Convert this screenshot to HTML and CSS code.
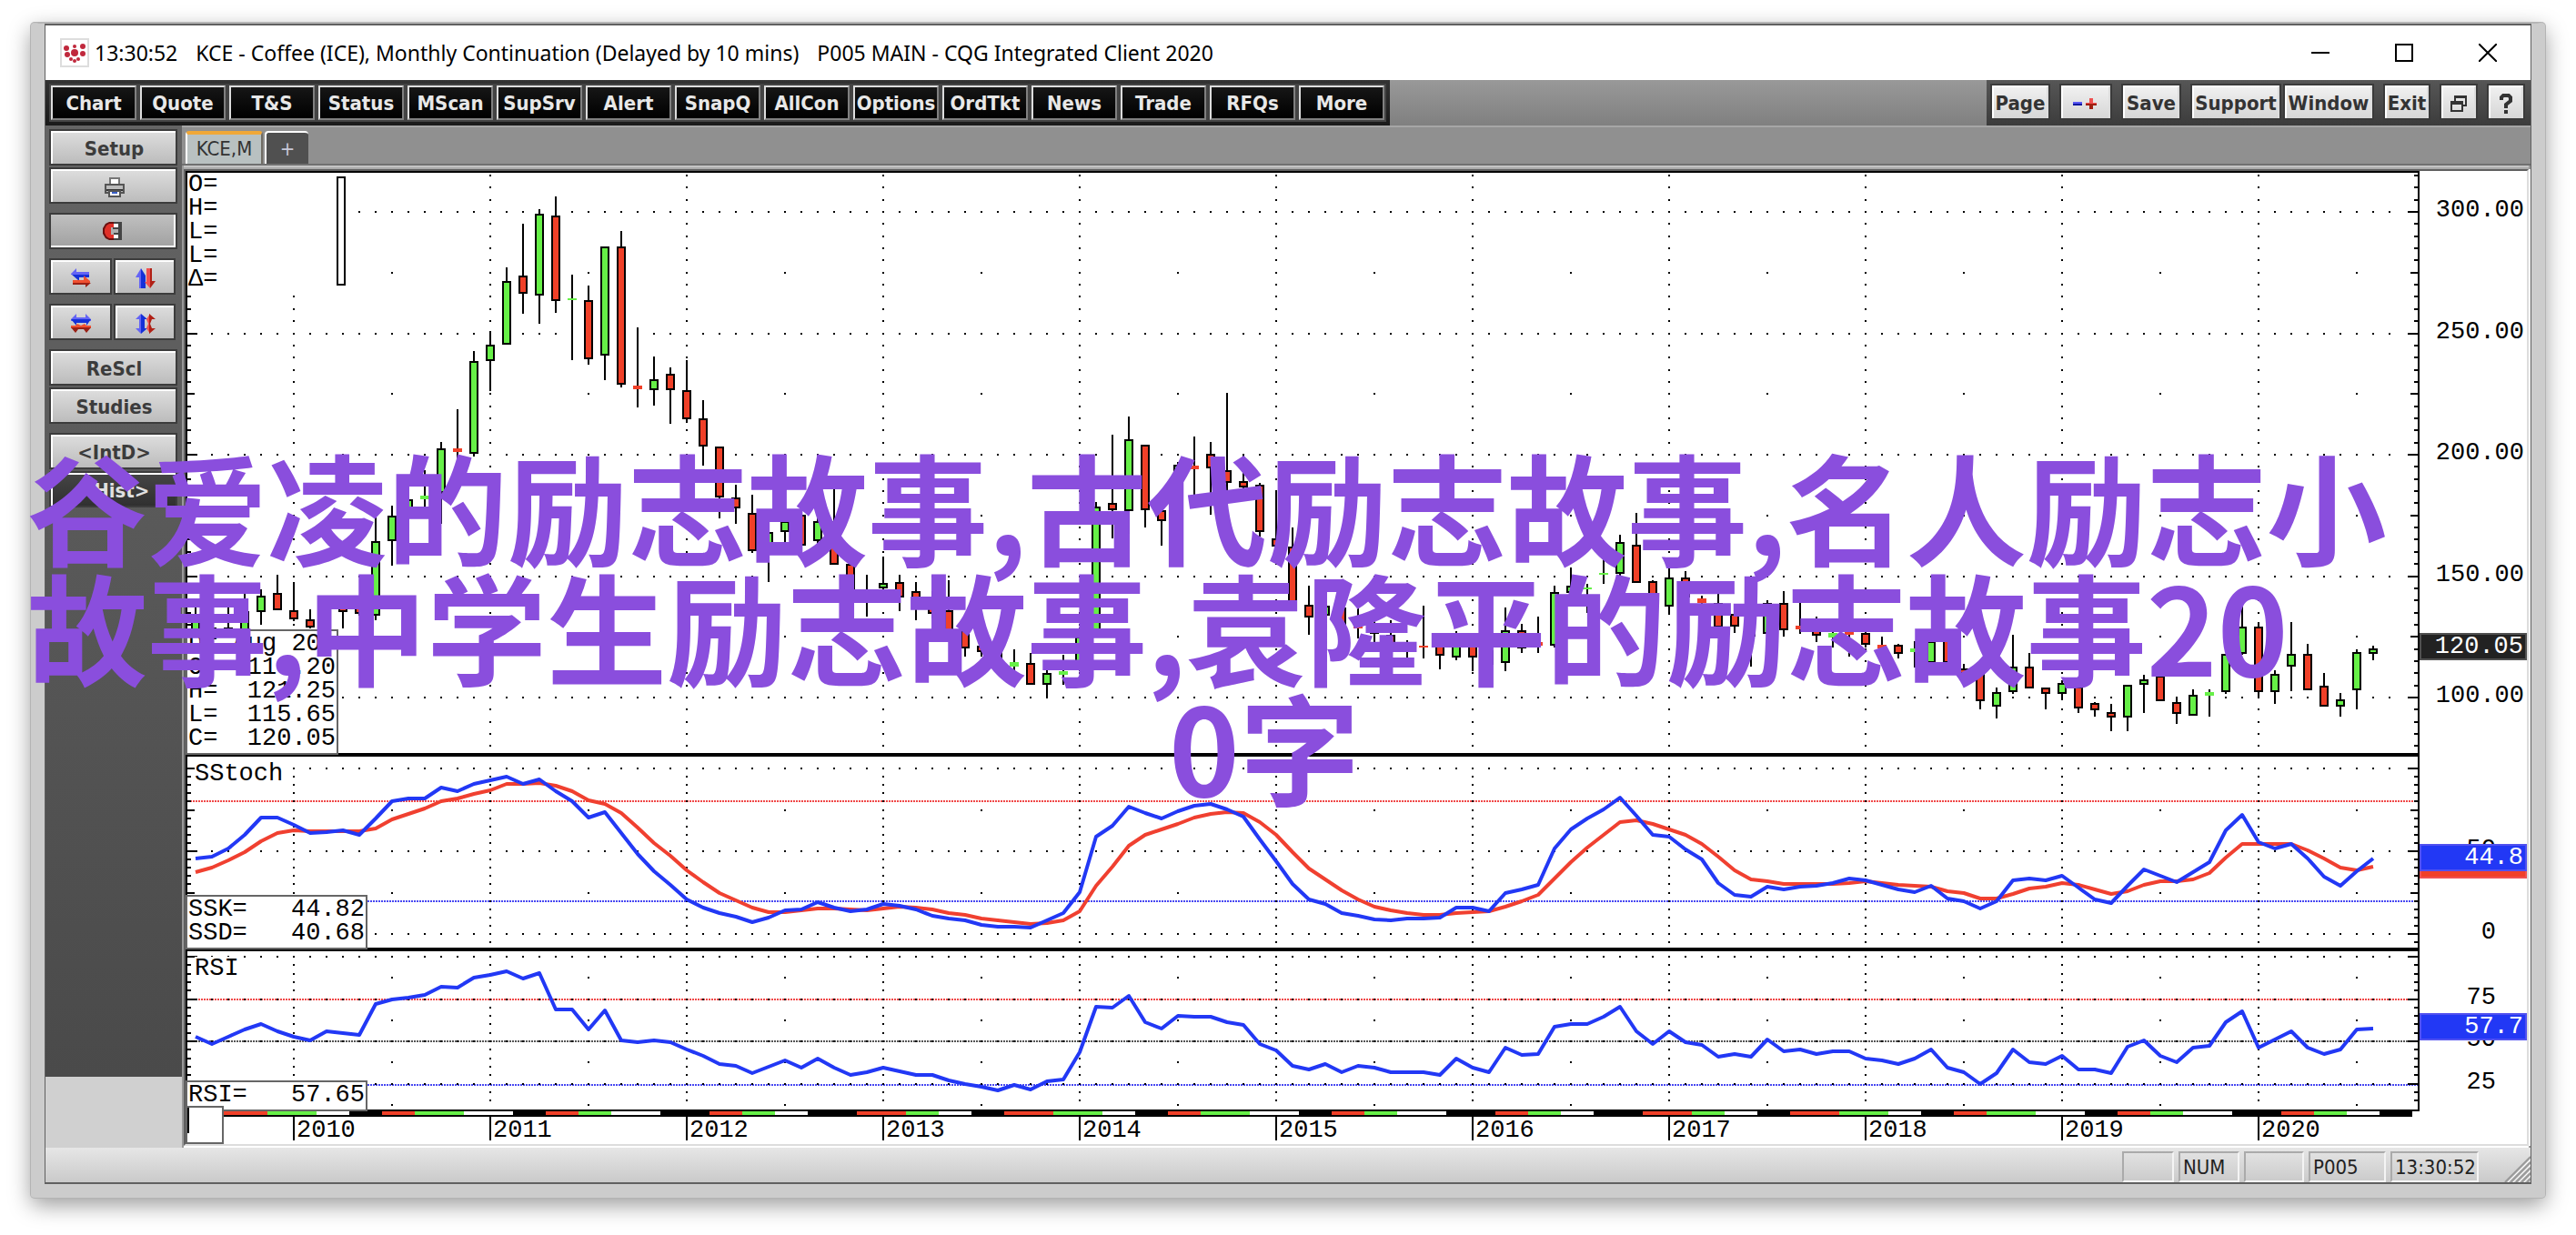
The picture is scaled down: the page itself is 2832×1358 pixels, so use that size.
FILE: index.html
```html
<!DOCTYPE html>
<html lang="en">
<head>
<meta charset="utf-8">
<title>KCE - Coffee (ICE), Monthly Continuation</title>
<link rel="stylesheet" href="styles.css">
</head>
<body>
<div class="window">
  <header class="titlebar">
    <svg class="app-icon" width="32" height="32" viewBox="0 0 32 32" aria-hidden="true">
      <rect x="1" y="1" width="30" height="30" fill="#fff" stroke="#ddd" stroke-width="2"/>
      <g fill="#c0283c"><circle cx="7" cy="11" r="3"/><circle cx="16" cy="9" r="2"/><circle cx="25" cy="9" r="3"/><circle cx="16" cy="16" r="4"/><circle cx="8" cy="18" r="3"/><circle cx="25" cy="17" r="3"/><circle cx="12" cy="23" r="2"/><circle cx="20" cy="23" r="2"/><circle cx="16" cy="25" r="2"/></g>
    </svg>
    <h1 class="title"><span>13:30:52</span><span>KCE - Coffee (ICE), Monthly Continuation (Delayed by 10 mins)</span><span>P005 MAIN - CQG Integrated Client 2020</span></h1>
    <div class="window-controls">
      <button type="button" aria-label="Minimize"><svg width="20" height="20"><path d="M0 10h20" stroke="#000" stroke-width="2"/></svg></button>
      <button type="button" aria-label="Maximize"><svg width="20" height="20"><rect x="1" y="1" width="18" height="18" fill="none" stroke="#000" stroke-width="2"/></svg></button>
      <button type="button" aria-label="Close"><svg width="20" height="20"><path d="M0 0l20 20M20 0L0 20" stroke="#000" stroke-width="2"/></svg></button>
    </div>
  </header>

  <div class="toolbar">
    <nav class="menu">
      <button type="button">Chart</button><button type="button">Quote</button><button type="button">T&amp;S</button><button type="button">Status</button><button type="button">MScan</button><button type="button">SupSrv</button><button type="button">Alert</button><button type="button">SnapQ</button><button type="button">AllCon</button><button type="button">Options</button><button type="button">OrdTkt</button><button type="button">News</button><button type="button">Trade</button><button type="button">RFQs</button><button type="button">More</button>
    </nav>
    <div class="tools">
      <button type="button" class="w-m">Page</button>
      <button type="button" class="w-s" aria-label="Zoom"><svg width="28" height="16" shape-rendering="crispEdges"><path d="M0 6h10v2H0z" fill="#5a5af5"/><path d="M0 8h10v2H0z" fill="#1018a0"/><path d="M18 2h4v5h4v2H14V7h4z" fill="#f05050"/><path d="M14 8h12v2h-4v4h-4v-4h-4z" fill="#a02010"/></svg></button>
      <button type="button" class="w-m">Save</button>
      <div class="pair"><button type="button" class="w-l">Support</button><button type="button" class="w-l">Window</button></div>
      <button type="button" class="w-xs">Exit</button>
      <button type="button" class="w-icon" aria-label="Restore"><svg width="18" height="18" fill="none" stroke="#333" stroke-width="2"><path d="M5 6V1h12v10h-4M5 2h12"/><path d="M1 7h12v10H1zM1 9h12"/></svg></button>
      <button type="button" class="w-icon" aria-label="Help"><svg width="14" height="22" fill="none" stroke="#333" stroke-width="4"><path d="M2 7V4l2-2h6l2 2v4l-5 4v4M5 20h4"/></svg></button>
    </div>
  </div>

  <div class="workspace">
    <aside class="sidebar">
      <div class="group">
        <button type="button">Setup</button>
        <button type="button" aria-label="Print"><svg width="22" height="22"><path d="M6 1h10v7H6z" fill="#fff" stroke="#777" stroke-width="2"/><path d="M1 8h20v9H1z" fill="#bbb" stroke="#555" stroke-width="2"/><path d="M2 13h18v2H2z" fill="#333"/><path d="M5 15h12v6H5z" fill="#fff" stroke="#555" stroke-width="2"/><path d="M8 16h6v2H8z" fill="#3a5fc8"/></svg></button>
      </div>
      <div class="group"><button type="button" class="pressed" aria-label="Magnet"><svg width="22" height="20"><path d="M7 0h7v6H9v8h5v6H7l-4-2-3-5V7l3-5z" fill="#6a1010"/><path d="M7 2h7v4H9v8h5v4H7l-3-2-2-4V8l2-4z" fill="#e03028"/><path d="M12 2h5v4h-5zM12 14h5v4h-5z" fill="#fff"/><path d="M17 0h4v20h-9v-2h5v-4h-5v-2h5V8h-6V6h6V2h-5V0z" fill="#444"/></svg></button></div>
      <div class="group row">
        <button type="button" aria-label="Scroll horizontally"><svg width="22" height="22"><path d="M0 6l6-6v4h14v3H0z" fill="#6464f5"/><path d="M1 7h19v3H9v4z" fill="#1530d8"/><path d="M2 13h12V8l7 6v2H2z" fill="#f05030"/><path d="M2 16h20l-6 5v-3H2z" fill="#9a2015"/></svg></button>
        <button type="button" aria-label="Scroll vertically"><svg width="22" height="22"><path d="M6 0v22H4V10H0z" fill="#6464f5"/><path d="M6 0l5 8v14H6z" fill="#1530d8"/><path d="M12 0h4v22l-6-7h2z" fill="#f05050"/><path d="M16 0h2v14h4l-6 8z" fill="#b02015"/></svg></button>
      </div>
      <div class="group row">
        <button type="button" aria-label="Stretch horizontally"><svg width="22" height="22"><path d="M0 6l6-6v4h10V0l6 6v2H0z" fill="#6464f5"/><path d="M0 6h22l-5 7v-3H6v3z" fill="#1530d8"/><path d="M0 13h5l2-2 4 2 4-2 2 2h5v3H0z" fill="#f05030"/><path d="M0 15h22l-5 6-3-4H8l-3 4z" fill="#9a2015"/></svg></button>
        <button type="button" aria-label="Stretch vertically"><svg width="22" height="22"><path d="M6 0v22l-6-6h4V6H0z" fill="#6464f5"/><path d="M6 0l7 6h-3v10h3l-7 6z" fill="#1530d8"/><path d="M16 0v22l-4-6 2-5-2-5z" fill="#f05050"/><path d="M15 0l7 6h-4l-2 5 2 5h4l-7 6z" fill="#b02015"/></svg></button>
      </div>
      <div class="group"><button type="button">ReScl</button><button type="button">Studies</button></div>
      <div class="group"><button type="button">&lt;IntD&gt;</button><button type="button" class="active">&lt;Hist&gt;</button></div>
      <div class="sidebar-foot"></div>
    </aside>

    <main class="main">
      <div class="tabs"><button type="button" class="tab current">KCE,M</button><button type="button" class="tab add" aria-label="New tab">+</button></div>
      <div class="chart">
        <div class="plot">
          <svg id="plot" class="canvas" role="img" aria-label="Price, slow stochastic and RSI"></svg>
          <div class="legend">O=<br>H=<br>L=<br>L=<br>Δ=</div>
          <div class="cursor-bar"></div>
          <dl class="readout price">
            <div><dt>D=</dt><dd>Aug 20&nbsp;</dd></div>
            <div><dt>O=</dt><dd>118.20</dd></div>
            <div><dt>H=</dt><dd>121.25</dd></div>
            <div><dt>L=</dt><dd>115.65</dd></div>
            <div><dt>C=</dt><dd>120.05</dd></div>
          </dl>
          <div class="study stoch-name">SStoch</div>
          <dl class="readout stoch">
            <div><dt>SSK=</dt><dd>44.82</dd></div>
            <div><dt>SSD=</dt><dd>40.68</dd></div>
          </dl>
          <div class="study rsi-name">RSI</div>
          <dl class="readout rsi"><div><dt>RSI=</dt><dd>57.65</dd></div></dl>
          <div class="corner"></div>
        </div>
        <div class="axis">
          <svg id="axis" class="canvas" role="img" aria-label="Value scale"></svg>
          <div class="tag last">120.05</div>
          <div class="tag slow"></div>
          <div class="tag fast">44.8</div>
          <div class="tag strength">57.7</div>
        </div>
      </div>
    </main>
  </div>

  <footer class="statusbar">
    <span class="cell c1"></span><span class="cell c2">NUM</span><span class="cell c3"></span><span class="cell c4">P005</span><span class="cell c5">13:30:52</span>
    <svg class="grip" width="30" height="30"><path d="M2 30L30 2M8 30L30 8M14 30L30 14M20 30L30 20M26 30L30 26" stroke="#999" stroke-width="2"/><path d="M5 30L30 5M11 30L30 11M17 30L30 17M23 30L30 23" stroke="#fff" stroke-width="1"/></svg>
  </footer>
</div>

<div class="caption">
  <p>谷爱凌的励志故事,古代励志故事,名人励志小</p>
  <p>故事,中学生励志故事,袁隆平的励志故事20</p>
  <p class="last-line">0字</p>
</div>
<script src="chart.js"></script>
</body>
</html>
```

FILE: styles.css
```css
* { box-sizing: border-box; }

body {
  margin: 0;
  padding: 25px 34px 40px;
  background: #fff;
  position: relative;
  font-family: "DejaVu Sans Condensed", "Noto Sans", sans-serif;
}

button {
  font: inherit;
  margin: 0;
  padding: 0;
  border: 0;
  background: none;
  display: flex;
  align-items: center;
  justify-content: center;
}

.window {
  background: #606060;
  border: 15px solid #ccc;
  border-top: 1px solid #bbb;
  border-radius: 4px;
  padding: 2px 1px;
  box-shadow: 0 0 0 1px #b4b4b4, 0 8px 24px rgba(0, 0, 0, 0.4);
}

/* title bar */
.titlebar {
  height: 60px;
  background: #fff;
  display: flex;
  align-items: center;
  padding: 0 37px 0 16px;
}
.app-icon { margin-right: 6px; }
.title {
  margin: 0;
  display: flex;
  gap: 20px;
  font: 23px/32px "Noto Sans", sans-serif;
  color: #000;
  white-space: nowrap;
}
.window-controls { margin-left: auto; display: flex; gap: 72px; }
.window-controls svg { display: block; }

/* toolbar */
.toolbar {
  height: 50px;
  display: flex;
  justify-content: space-between;
  background: linear-gradient(#999, #808080);
  font-weight: bold;
  font-size: 22px;
  line-height: 30px;
}
.menu {
  display: flex;
  gap: 4px;
  padding: 6px;
  background: linear-gradient(#343434, #1a1a1a);
}
.menu button {
  width: 94px;
  height: 38px;
  padding-top: 2px;
  color: #e8e8e8;
  background: linear-gradient(#161616, #000);
  border: 2px solid #ddd;
  border-right-color: #808080;
  border-bottom-color: #808080;
  box-shadow: 0 0 0 2px #444;
}
.tools {
  display: flex;
  gap: 14px;
  padding: 6px 8px 6px 6px;
  background: linear-gradient(#565656, #3c3c3c);
}
.pair { display: flex; gap: 6px; }
.tools button {
  height: 36px;
  padding-top: 2px;
  color: #333;
  background: linear-gradient(#f0f0f0, #d6d6d6);
  border: 2px solid #fff;
  border-right-color: #ddd;
  border-bottom: 0;
  box-shadow: 0 0 0 2px #3a3a3a;
}
.tools .w-icon { width: 38px; }
.tools .w-xs { width: 48px; }
.tools .w-s { width: 54px; }
.tools .w-m { width: 62px; }
.tools .w-l { width: 96px; }

/* workspace */
.workspace { display: flex; }
.sidebar {
  width: 150px;
  flex: none;
  display: flex;
  flex-direction: column;
  gap: 14px;
  padding-top: 6px;
  background: linear-gradient(#646464, #484848);
  font-weight: bold;
  font-size: 22px;
  line-height: 30px;
}
.group { display: flex; flex-direction: column; gap: 6px; padding: 0 7px 0 6px; }
.group.row { flex-direction: row; padding-right: 9px; }
.group button {
  height: 36px;
  padding-top: 2px;
  color: #3c3c3c;
  background: linear-gradient(#dcdcdc, #bcbcbc);
  border: 2px solid #fff;
  border-right: 0;
  border-bottom: 0;
  box-shadow: 0 0 0 2px #3c3c3c;
}
.group.row button { flex: 1; }
.group button.pressed {
  background: linear-gradient(#c0c0c0, #a2a2a2);
  border: 0;
  border-right: 2px solid #fff;
  border-bottom: 2px solid #fff;
}
.group button.active {
  color: #e0e0e0;
  background: linear-gradient(#444, #303030);
}
.sidebar-foot { height: 78px; margin-top: auto; background: #d0d0d0; }

.main { flex: 1; min-width: 0; background: #999; padding-left: 2px; }
.tabs {
  height: 44px;
  margin-left: -2px;
  padding: 4px 0 0 4px;
  display: flex;
  gap: 2px;
  background: #909090;
  border-top: 2px solid #a6a6a6;
  border-bottom: 2px solid #707070;
}
.tab { height: 36px; }
.tab.current {
  width: 85px;
  font-size: 22px;
  line-height: 28px;
  color: #333;
  background: #b9c1c1;
  border-top: 4px solid #f0a838;
  border-left: 2px solid #fff;
  border-right: 2px solid #706c64;
  border-radius: 4px 4px 0 0;
}
.tab.add {
  width: 48px;
  font-size: 22px;
  color: #c8c8d8;
  background: #505050;
  border-top: 2px solid #fff;
  border-left: 2px solid #fff;
  border-radius: 4px 4px 0 0;
}
.chart {
  display: flex;
  background: #fff;
  border-top: 2px solid #606060;
  border-left: 2px solid #606060;
  border-right: 2px solid #ddd;
  border-bottom: 2px solid #ddd;
  margin: 4px 2px 2px 0;
  box-shadow: 0 -2px #aaa, 0 -4px #c4c4c4, 2px 0 #fff, 0 2px #fff;
}
.plot, .axis {
  position: relative;
  height: 1070px;
  font-family: "Liberation Mono", monospace;
  font-size: 27px;
  line-height: 26px;
  color: #000;
}
.plot { flex: 1; min-width: 0; }
.axis { width: 118px; flex: none; }
.canvas { display: block; width: 100%; height: 100%; }
.legend {
  position: absolute;
  left: 2px;
  top: 2px;
  width: 178px;
  padding-left: 1px;
  background: #fff;
}
.cursor-bar {
  position: absolute;
  left: 166px;
  top: 6px;
  width: 10px;
  height: 120px;
  border: 2px solid #000;
}
.readout {
  position: absolute;
  left: 0;
  margin: 0;
  padding: 1px;
  background: #fff;
  border: 2px solid #666;
}
.readout div { display: flex; justify-content: space-between; }
.readout dd { margin: 0; }
.readout.price { top: 504px; width: 168px; height: 138px; }
.readout.stoch { top: 796px; width: 200px; height: 60px; }
.readout.rsi { top: 1000px; width: 200px; height: 34px; }
.study { position: absolute; left: 10px; background: #fff; }
.stoch-name { top: 650px; }
.rsi-name { top: 864px; }
.corner {
  position: absolute;
  left: 0;
  top: 1028px;
  width: 42px;
  height: 42px;
  background: #fff;
  border: 2px solid #666;
}
.corner::before {
  content: "";
  display: block;
  width: 2px;
  height: 28px;
  background: #000;
}
.tag {
  position: absolute;
  left: 0;
  right: 0;
  padding-right: 2px;
  height: 30px;
  color: #fff;
  border: 2px solid #5050f0;
  background: #2238f5;
  text-align: right;
}
.tag.last { top: 508px; background: #222; border-color: #505050; }
.tag.slow { top: 748px; background: #f04028; border-color: #f05050; }
.tag.fast { top: 740px; }
.tag.strength { top: 926px; }

/* status bar */
.statusbar {
  height: 38px;
  display: flex;
  align-items: flex-start;
  justify-content: flex-end;
  gap: 5px;
  padding-top: 4px;
  background: linear-gradient(#e6e6e6, #cacaca);
  font-size: 22px;
  line-height: 32px;
  color: #222;
}
.cell {
  height: 34px;
  padding-left: 3px;
  border: 2px solid #aaa;
  border-right-color: #f4f4f4;
  border-bottom-color: #f4f4f4;
}
.c1 { width: 57px; }
.c2 { width: 67px; }
.c3 { width: 66px; }
.c4 { width: 85px; }
.c5 { width: 97px; }
.grip { margin: 4px 0 0 22px; }

/* caption laid over the window */
.caption {
  position: absolute;
  left: 30px;
  top: 489px;
  width: 2720px;
  font: bold 132px/132px "Noto Sans CJK SC", sans-serif;
  color: #8a4edd;
  white-space: nowrap;
  pointer-events: none;
}
.caption p { margin: 0; }
.last-line { text-align: center; }
```

FILE: chart.js
```js
// Bars run from July 2009, one every 18px. Each bar: high, body top, body bottom, low, colour.
const bars = `660 680 700 710 g|655 690 705 715 g|665 690 710 712 g|651 672 694 700 g|648 655 673 687 g|632 652 671 671 r|640 671 681 683 r|670 681 690 691 r|660 668 689 689 g|655 664 673 691 r|655 664 675 677 r|569 595 677 682 g
556 567 595 622 g|540 549 570 580 g|517 545 549 558 g|486 493 542 576 g|450 493 497 508 r|386 397 499 502 g|364 379 397 430 g|294 309 379 379 g|246 303 323 345 r|230 235 325 356 g|216 237 331 344 r|302 328 330 396 g
314 330 395 401 r|271 271 391 418 g|254 271 423 426 r|360 424 428 448 r|392 417 429 446 g|404 411 429 466 r|396 429 461 465 r|440 460 491 512 r|491 491 547 570 r|533 547 559 576 r|544 564 606 608 r|561 585 610 640 g
565 573 585 600 g|560 566 600 600 r|563 573 595 600 g|538 573 621 621 r|620 620 653 655 r|632 649 654 678 r|612 641 647 649 g|632 640 657 672 r|640 650 659 682 r|650 657 675 680 r|638 671 694 694 r|690 693 713 722 r
705 710 717 722 r|705 713 728 732 r|714 728 733 738 g|718 729 753 753 r|735 740 753 767 g|720 738 742 753 g|690 700 737 738 g|552 557 700 700 g|478 553 561 592 r|458 483 562 587 g|489 489 561 580 r|560 561 573 600 r
508 511 560 560 g|480 512 516 545 r|486 499 515 566 r|432 517 531 540 r|500 529 536 537 r|531 533 585 590 r|540 592 601 602 r|580 601 667 667 r|644 665 679 698 r|652 666 677 682 g|668 668 690 690 r|669 686 691 702 r
680 687 697 707 r|682 698 708 708 r|704 706 714 725 g|666 710 712 724 r|700 709 721 736 r|694 697 723 726 g|697 697 723 738 r|710 715 731 732 r|668 693 729 738 g|686 693 713 718 r|678 706 710 718 r|644 651 710 712 g
624 644 652 660 g|642 646 648 674 g|613 630 632 642 g|588 596 631 633 g|564 599 641 641 r|638 639 655 655 r|624 635 667 676 g|628 635 657 660 r|655 658 663 664 r|653 663 690 690 r|672 675 689 696 r|675 682 700 733 g
660 663 697 698 g|650 663 693 700 r|663 688 692 697 r|678 693 699 706 r|690 696 701 712 g|690 695 698 722 r|695 696 709 712 r|700 709 713 716 r|708 709 719 724 r|705 713 717 734 g|700 705 729 729 g|700 703 729 729 r
730 735 741 745 r|735 741 771 780 r|756 761 777 790 g|698 733 761 763 g|718 733 757 757 r|756 756 763 780 r|748 751 763 770 g|750 755 779 784 r|772 773 781 788 r|774 783 789 804 r|753 753 789 804 g|742 747 753 784 g
740 743 771 771 r|766 772 785 796 r|758 764 787 787 g|758 761 765 788 g|719 719 761 763 g|664 689 719 720 g|684 689 761 767 r|737 741 761 774 g|684 719 733 760 g|708 719 759 759 r|740 754 777 777 r|762 769 777 788 g
714 717 759 780 g|710 713 719 726 g`.split(/[|\n]/).map(r => r.split(' '));

const slowK = [944,942,933,918,899,899,907,916,915,913,918,900,881,878,878,866,870,862,858,854,862,857,870,881,899,893,916,939,958,973,989,998,1004,1008,1014,1009,1001,1000,992,998,1002,1000,994,996,1000,1007,1010,1012,1017,1019,1019,1020,1012,1004,981,920,908,887,894,900,892,886,884,890,898,923,947,972,989,994,1004,1007,1011,1012,1010,1010,1009,998,998,1002,982,978,973,933,912,900,890,877,897,918,920,934,945,971,984,986,975,978,975,974,971,966,968,973,978,981,974,988,991,999,991,968,966,968,963,976,989,993,974,956,963,970,959,948,913,896,926,933,928,944,964,974,958,944];
const slowD = [959,954,946,937,925,916,913,914,914,914,914,911,901,895,889,881,878,873,869,862,862,861,864,870,880,884,894,910,927,941,957,970,982,990,998,1003,1003,1001,999,999,1000,1001,999,997,998,1000,1004,1006,1010,1012,1014,1016,1015,1012,1002,974,953,930,918,912,906,899,895,893,894,904,918,937,955,967,979,989,997,1001,1004,1006,1006,1004,1003,1002,997,991,984,966,948,932,918,904,902,906,912,918,928,942,957,967,969,972,972,972,972,971,969,971,973,974,975,980,982,988,988,983,977,975,971,973,978,983,980,973,969,969,967,960,943,928,928,928,928,935,944,954,957,953];
const rsi = [1140,1148,1140,1132,1126,1134,1140,1144,1134,1136,1138,1104,1099,1097,1094,1085,1086,1075,1072,1068,1076,1070,1110,1110,1132,1111,1144,1146,1144,1146,1154,1161,1170,1172,1180,1173,1166,1174,1164,1174,1182,1179,1174,1178,1182,1182,1188,1192,1195,1199,1193,1198,1189,1187,1157,1107,1108,1095,1124,1131,1117,1118,1118,1124,1127,1148,1155,1172,1176,1170,1179,1172,1174,1179,1179,1179,1182,1164,1174,1179,1152,1160,1159,1129,1126,1126,1118,1107,1134,1148,1134,1146,1149,1162,1159,1162,1143,1156,1154,1159,1156,1156,1164,1166,1170,1164,1154,1174,1179,1192,1180,1154,1168,1170,1161,1176,1176,1180,1151,1144,1161,1168,1152,1150,1124,1112,1152,1143,1134,1152,1159,1154,1132,1131];

const PITCH = 18, FIRST = 215, LEFT = 204, TOP = 188;
const plot = document.getElementById('plot');
const right = LEFT + plot.clientWidth;
const x = i => FIRST + PITCH * i;
const colours = { r: '#f04028', g: '#66f047', w: '#fff', b: '#000' };
const box = (l, t, w, h, fill = '#000') => `<rect x="${l}" y="${t}" width="${w}" height="${h}" fill="${fill}"/>`;
const dot = (cx, cy) => box(cx - 1, Math.round(cy) - 1, 2, 2);

const priceY = v => 767 - (v - 100) * 2.67;
const stochY = v => 1027 - v * 1.82;
const rsiY = v => 1145 - (v - 50) * 1.86;
let out = '';

// Grid of one panel: rows of dots on major values, columns on each January, single dots mid-year.
function grid(y, low, high, major, middle) {
  for (const v of major) for (let px = x(1); px < right - 30; px += PITCH) out += dot(px, y(v));
  for (let v = low; v <= high; v += 5) {
    for (let px = x(6); px < right; px += PITCH * 12) out += dot(px, y(v));
    const length = major.includes(v) ? 11 : middle.includes(v) ? 8 : 4;
    const ty = Math.round(y(v)) - 1;
    out += box(LEFT + 2, ty, length, 2) + box(right - 2 - length, ty, length, 2);
  }
  for (const v of middle) for (let px = x(12); px < right; px += PITCH * 12) out += dot(px, y(v));
}
const level = (y, colour) => `<path d="M${LEFT + 2} ${y}H${right - 2}" stroke="${colour}" stroke-width="2" stroke-dasharray="2 1"/>`;
const line = (values, colour) => `<polyline points="${values.map((v, i) => x(i) + ',' + v).join(' ')}" fill="none" stroke="${colour}" stroke-width="4" stroke-linejoin="round" shape-rendering="auto"/>`;

out += level(881, '#f04848') + level(991, '#4848f2');
out += level(1099, '#f04848') + level(1145, '#555') + level(1193, '#4848f2');
grid(priceY, 80, 315, [100, 150, 200, 250, 300], [125, 175, 225, 275]);
grid(stochY, -5, 100, [0, 50, 100], [25, 75]);
grid(rsiY, 15, 100, [25, 50, 75, 100], []);
for (const v of [87.5, 62.5, 37.5, 12.5]) for (let px = x(12); px < right; px += PITCH * 12) out += dot(px, rsiY(v));

bars.forEach(([high, top, bottom, low, c], i) => {
  out += box(x(i) - 1, high, 2, low - high);
  const h = bottom - top;
  out += h < 6 ? box(x(i) - 5, top, 10, h, colours[c])
    : box(x(i) - 5, top, 10, h) + box(x(i) - 3, +top + 2, 6, h - 4, colours[c]);
});
out += line(slowD, '#f04030') + line(slowK, '#2238f5') + line(rsi, '#2238f5');

// Panel frames
out += box(LEFT, TOP, right - LEFT, 2) + box(LEFT, TOP, 2, 1034) + box(right - 2, TOP, 2, 1034);
out += box(LEFT, 828, right - LEFT, 4) + box(LEFT, 1042, right - LEFT, 4) + box(LEFT, 1220, right - LEFT, 2);

// Season strip: run lengths in months
let sx = 240;
const strip = 'r3g3w2b2r2g3w3b2r2g2w3b3r2g2w2b3r3g2w2b2r3g3w2b2r2g3w3b2r2g2w3b3r2g2w2b3r3g2w2b2r3g3w2b2r2g3w3b2r2g2w3b3r2g2w2b2';
out += box(240, 1226, 2412, 2);
for (const [, c, n] of strip.matchAll(/([rgwb])(\d)/g)) {
  out += box(sx, 1222, n * PITCH, 4, colours[c]);
  sx += n * PITCH;
}
for (let year = 2010; year <= 2020; year++) {
  const px = x(6 + (year - 2010) * 12);
  out += box(px - 1, 1228, 2, 26) + `<text x="${px + 3}" y="1250">${year}</text>`;
}
plot.innerHTML = `<g transform="translate(${-LEFT},${-TOP})" shape-rendering="crispEdges">${out}</g>`;

const label = (text, px, y) => `<text x="${px}" y="${Math.round(y) - TOP + 5}" text-anchor="end">${text}</text>`;
document.getElementById('axis').innerHTML =
  [300, 250, 200, 150, 100].map(v => label(v + '.00', 115, priceY(v))).join('') +
  [50, 0].map(v => label(v, 84, stochY(v))).join('') +
  [75, 50, 25].map(v => label(v, 84, rsiY(v))).join('');
```
